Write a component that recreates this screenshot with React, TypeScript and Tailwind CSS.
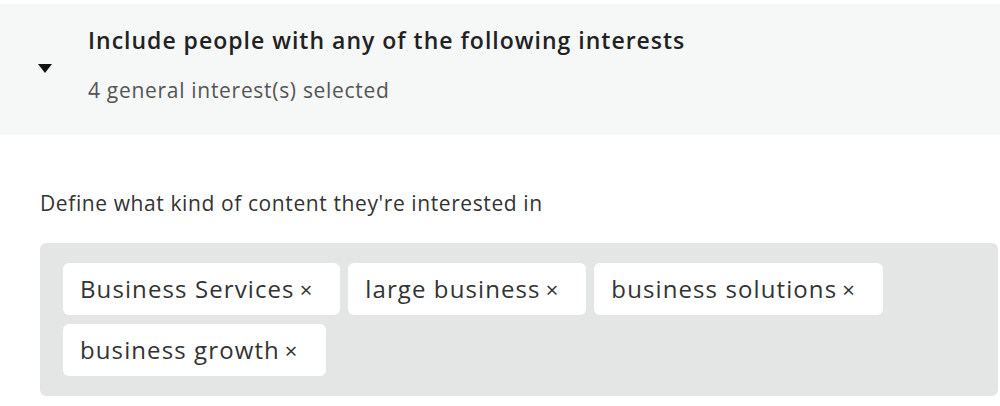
import React from "react";

const interests = ["Business Services", "large business", "business solutions", "business growth"];

function Chip({ label }: { label: string }) {
  return (
    <div className="flex h-[52px] items-center rounded-md bg-white pl-[17px] pr-[27px] text-[24px] tracking-[1.1px] text-[#333]">
      <span>{label}</span>
      <span className="ml-[5px] text-[22px]">×</span>
    </div>
  );
}

export default function App() {
  return (
    <div className="h-[406px] w-[1000px] bg-white pt-1 font-['Open_Sans',sans-serif]">
      <div className="flex h-[131px] items-start bg-[#f6f7f7]">
        <div className="ml-[38px] mt-[60px] h-0 w-0 border-x-[7px] border-t-[9px] border-x-transparent border-t-[#111]" />
        <div className="ml-[36px] mt-[25px] flex flex-col">
          <p className="text-[23px] font-semibold leading-none tracking-[1px] text-[#222]">
            Include people with any of the following interests
          </p>
          <p className="mt-[28px] text-[21px] leading-none tracking-[0.7px] text-[#555]">
            4 general interest(s) selected
          </p>
        </div>
      </div>
      <p className="ml-[40px] mt-[58px] text-[21px] leading-none tracking-[0.6px] text-[#333]">
        Define what kind of content they're interested in
      </p>
      <div className="ml-[40px] mt-[29px] flex w-[958px] flex-wrap gap-x-[8px] gap-y-[9px] rounded-md bg-[#e4e5e5] px-[23px] py-[20px]">
        {interests.map((i) => (
          <Chip key={i} label={i} />
        ))}
      </div>
    </div>
  );
}
